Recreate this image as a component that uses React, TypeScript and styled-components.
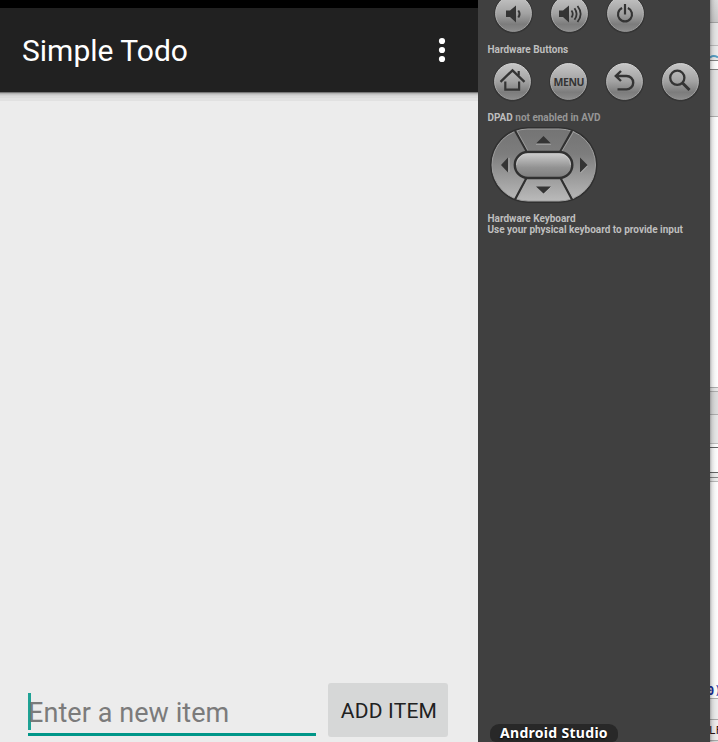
import React from 'react';
import styled, { createGlobalStyle } from 'styled-components';

const GlobalStyle = createGlobalStyle`
  body { margin: 0; overflow: hidden; background: #404040; }
  * { box-sizing: border-box; }
`;

const Screen = styled.div`
  display: grid;
  grid-template-columns: 478px 232px 8px;
  width: 718px;
  height: 742px;
  overflow: hidden;
  font-family: Roboto, "Liberation Sans", sans-serif;
`;

const Phone = styled.main`
  display: flex;
  flex-direction: column;
  min-width: 0;
  background: #ececec;
`;

const StatusBar = styled.div`
  height: 8px;
  flex: none;
  background: #000;
`;

const AppBar = styled.header`
  display: flex;
  flex: none;
  align-items: center;
  justify-content: space-between;
  height: 84px;
  padding: 0 31px 0 22px;
  background: #212121;
`;

const Title = styled.h1`
  margin: 2px 0 0;
  color: #fff;
  font-size: 30px;
  font-weight: 400;
  line-height: 36px;
`;

const OverflowButton = styled.button`
  display: flex;
  padding: 0;
  border: 0;
  background: none;
`;

const BarShadow = styled.div`
  height: 9px;
  flex: none;
  background: linear-gradient(#777 0 1px, #b0b0b0 1px 2px, #c6c6c6 2px 3px, #d2d2d2 3px 4px, #dadada 4px 6px, #e1e1e1 6px);
`;

const TodoList = styled.section`
  flex: 1;
`;

const EntryRow = styled.form`
  display: flex;
  flex: none;
  gap: 12px;
  height: 59px;
  padding: 0 30px 0 28px;
`;

const Field = styled.label`
  display: flex;
  align-items: center;
  width: 288px;
  height: 53px;
  border-bottom: 3px solid #009688;
  color: #7b7b7b;
  font-size: 27px;
  line-height: 32px;
`;

const Caret = styled.span`
  width: 3px;
  height: 37px;
  margin: 7px -3px 0 0;
  background: #1fa295;
`;

const Placeholder = styled.span`
  padding-top: 9px;
  letter-spacing: 0.07px;
  white-space: nowrap;
`;

const AddButton = styled.button`
  width: 120px;
  height: 54px;
  padding: 2px 0 0 2px;
  border: 0;
  border-radius: 3px;
  background: #d6d7d7;
  color: #212121;
  font: 400 21px/24px Roboto, sans-serif;
  letter-spacing: 0.2px;
  white-space: nowrap;
`;

const Controls = styled.aside`
  display: flex;
  flex-direction: column;
  min-width: 0;
  background: #404040;
`;

const KeyRow = styled.div<{ $left: number; $top: number }>`
  display: flex;
  flex: none;
  gap: 16px;
  height: 40px;
  margin: ${p => p.$top}px 0 0 ${p => p.$left}px;
`;

const Key = styled.button`
  display: flex;
  flex: none;
  width: 40px;
  height: 40px;
  padding: 0;
  border: 0;
  background: none;
`;

const Label = styled.p<{ $top: number; $dim?: boolean }>`
  flex: none;
  margin: ${p => p.$top}px 0 0 9.5px;
  color: ${p => (p.$dim ? '#969696' : '#bebebe')};
  font-size: 10px;
  font-weight: 700;
  line-height: 12px;
  letter-spacing: -0.01px;
  white-space: nowrap;
`;

const Strong = styled.span`
  color: #bebebe;
`;

const Pad = styled.div`
  flex: none;
  height: 78px;
  margin: 2px 0 0 11px;
`;

const DockLabel = styled.div`
  width: 128px;
  height: 18px;
  flex: none;
  margin: auto 0 0 12px;
  padding-left: 10px;
  border-radius: 9px 9px 6px 6px;
  background: #282828;
  color: #fff;
  font: 700 14px/17px "Noto Sans", "Open Sans", sans-serif;
  letter-spacing: 0.3px;
  text-shadow: 0 1px 2px #000;
  white-space: nowrap;
`;

const Edge = styled.div`
  display: flex;
  flex-direction: column;
  position: relative;
  overflow: hidden;
  &::after {
    content: "";
    position: absolute;
    inset: 0;
    background: linear-gradient(90deg, rgba(0,0,0,.3), rgba(0,0,0,.12) 25%, rgba(0,0,0,.04) 60%, transparent);
  }
`;

const Band = styled.div<{ $h: number; $bg: string; $line?: string }>`
  flex: none;
  height: ${p => p.$h}px;
  overflow: hidden;
  background: ${p => p.$bg};
  border-bottom: ${p => (p.$line ? `1px solid ${p.$line}` : '0')};
`;

const Code = styled.div<{ $top: number; $left: number; $color: string; $size: number }>`
  padding-top: ${p => p.$top}px;
  margin-left: ${p => p.$left}px;
  color: ${p => p.$color};
  font: ${p => p.$size}px/14px "DejaVu Sans Mono", monospace;
  white-space: nowrap;
`;

const Bold = styled.span`
  color: #1a2f9c;
  font-weight: 700;
`;

function RoundKey({ name, children }: { name: string; children: React.ReactNode }) {
  return (
    <Key aria-label={name}>
      <svg width="40" height="40" viewBox="0 0 40 40">
        <circle cx="19.5" cy="20" r="19.5" fill="#353535" />
        <circle cx="19.5" cy="19.5" r="17.9" fill="url(#metal)" stroke="url(#rim)" strokeWidth="1" />
        {children}
      </svg>
    </Key>
  );
}

const ink = '#343434';

const PadDrawing = styled.svg`
  display: block;
`;

const Gradients = styled.svg`
  display: block;
  flex: none;
`;

function DirectionPad() {
  return (
    <PadDrawing width="110" height="78" viewBox="0 0 110 78">
      <rect x="1" y="1" width="107.5" height="76" rx="38" fill="#303030" />
      <rect x="3" y="3" width="103.5" height="72" rx="36" fill="url(#pad)" stroke="#a0a0a0" />
      <path d="M26 4.5 38 26M83 4.5 71 26M38 51 26 73.5M71 51 83 73.5" stroke="#303030" strokeWidth="2.2" />
      <path d="M28 5 39 25M85 5 73 25M40 51 29 73M73 51 85 73" stroke="#aaa" strokeWidth=".7" />
      <rect x="25.8" y="26" width="57.5" height="26" rx="13" fill="url(#center)" stroke="#303030" strokeWidth="2.4" />
      <path d="M27.5 39a11.5 11.5 0 0 1 11.5-11.3h31a11.5 11.5 0 0 1 11.5 11.3" fill="none" stroke="#ccc" strokeWidth=".6" />
      <path d="M47 17.5 54.5 10l7.5 7.5ZM47 60.5h15l-7.5 7ZM12 39l7-7.5v15ZM91 31.5l7.5 7.5-7.5 7.5Z" fill="#343434" />
      <path d="M47 18.2h15M55 68l7-7M20 32v14M91.5 47l7-7" stroke="#b5b5b5" strokeWidth=".8" />
    </PadDrawing>
  );
}

export default function App() {
  return (
    <>
      <GlobalStyle />
      <Screen>
        <Phone>
          <StatusBar />
          <AppBar>
            <Title>Simple Todo</Title>
            <OverflowButton aria-label="More options">
              <svg width="10" height="26" viewBox="0 0 10 26" fill="#fff">
                <circle cx="5" cy="4" r="3.1" />
                <circle cx="5" cy="13" r="3.1" />
                <circle cx="5" cy="22" r="3.1" />
              </svg>
            </OverflowButton>
          </AppBar>
          <BarShadow />
          <TodoList />
          <EntryRow>
            <Field>
              <Caret />
              <Placeholder>Enter a new item</Placeholder>
            </Field>
            <AddButton type="button">ADD ITEM</AddButton>
          </EntryRow>
        </Phone>

        <Controls>
          <Gradients width="0" height="0">
            <defs>
              <linearGradient id="metal" x1="0" y1="0" x2="0" y2="1">
                <stop offset="0" stopColor="#c6c6c6" />
                <stop offset=".5" stopColor="#a2a2a2" />
                <stop offset=".8" stopColor="#7c7c7c" />
                <stop offset="1" stopColor="#8c8c8c" />
              </linearGradient>
              <linearGradient id="rim" x1="0" y1="0" x2="0" y2="1">
                <stop offset="0" stopColor="#d6d6d6" />
                <stop offset="1" stopColor="#949494" />
              </linearGradient>
              <linearGradient id="pad" x1="0" y1="0" x2="0" y2="1">
                <stop offset="0" stopColor="#747474" />
                <stop offset=".35" stopColor="#7d7d7d" />
                <stop offset="1" stopColor="#bababa" />
              </linearGradient>
              <linearGradient id="center" x1="0" y1="0" x2="0" y2="1">
                <stop offset="0" stopColor="#d2d2d2" />
                <stop offset=".6" stopColor="#929292" />
                <stop offset="1" stopColor="#7d7d7d" />
              </linearGradient>
            </defs>
          </Gradients>
          <KeyRow $top={-6} $left={16}>
            <RoundKey name="Volume down">
              <path d="M12 16.5h4l6-5v17l-6-5.5h-4Z" fill={ink} />
              <path d="M24.3 16.5q2.5 3.3 0 7" fill="none" stroke={ink} strokeWidth="2" />
            </RoundKey>
            <RoundKey name="Volume up">
              <path d="M9 16.5h4l6-5v17l-6-5.5h-4Z" fill={ink} />
              <path d="M21.5 16.5q2.5 3.3 0 7M24.5 14.2q4.2 5.8 0 11.6M27.5 12q6.3 8 0 16" fill="none" stroke={ink} strokeWidth="1.8" />
            </RoundKey>
            <RoundKey name="Power">
              <path d="M16.1 14A7 7 0 1 0 21.9 14" fill="none" stroke={ink} strokeWidth="2.2" />
              <path d="M19 10v10.5" stroke={ink} strokeWidth="2.2" />
            </RoundKey>
          </KeyRow>
          <Label $top={10}>Hardware Buttons</Label>
          <KeyRow $top={6} $left={15}>
            <RoundKey name="Home">
              <path d="m7.5 19.8 12-11.5 12 11.5" fill="none" stroke={ink} strokeWidth="2.3" />
              <path d="M25.7 13.5V9M12.3 19.5v8.2h13.8v-8.2" fill="none" stroke={ink} strokeWidth="2.2" />
            </RoundKey>
            <RoundKey name="Menu">
              <text x="20" y="24" textAnchor="middle" textLength="31" fill={ink} fontFamily="Open Sans, sans-serif" fontSize="10.5" fontWeight="700">MENU</text>
            </RoundKey>
            <RoundKey name="Back">
              <path d="M16 9 10.8 14l5.2 5M11 14H21.5a6.7 6.7 0 0 1 0 13.4H12.5" fill="none" stroke={ink} strokeWidth="2.4" />
            </RoundKey>
            <RoundKey name="Search">
              <circle cx="16.3" cy="15.8" r="7.1" fill="none" stroke={ink} strokeWidth="2.3" />
              <path d="m21.5 21 7 7" stroke={ink} strokeWidth="3" />
            </RoundKey>
          </KeyRow>
          <Label $top={10} $dim>
            <Strong>DPAD</Strong> not enabled in AVD
          </Label>
          <Pad><DirectionPad /></Pad>
          <Label $top={9}>Hardware Keyboard</Label>
          <Label $top={-1}>Use your physical keyboard to provide input</Label>
          <DockLabel>Android Studio</DockLabel>
        </Controls>

        <Edge>
          <Band $h={23} $bg="linear-gradient(#dedede, #cacaca)" $line="#a5a5a5" />
          <Band $h={23} $bg="#e7e7e7" $line="#bdbdbd" />
          <Band $h={15} $bg="#ededed" $line="#858585">
            <svg width="8" height="14" viewBox="0 0 8 14">
              <path d="M0 10.5q3.5-3 8 0" fill="none" stroke="#579fc5" strokeWidth="2" />
            </svg>
          </Band>
          <Band $h={9} $bg="#fff" $line="#858585" />
          <Band $h={47} $bg="#e6e6e6" $line="#b0b0b0" />
          <Band $h={271} $bg="#fff" $line="#b0b0b0" />
          <Band $h={4} $bg="#e9e9e9" $line="#b0b0b0" />
          <Band $h={23} $bg="#dedede" $line="#b0b0b0" />
          <Band $h={29} $bg="#e8e8e8" $line="#c0c0c0" />
          <Band $h={4} $bg="#fff" $line="#666" />
          <Band $h={25} $bg="#fff" $line="#666" />
          <Band $h={5} $bg="#eee" $line="#888" />
          <Band $h={4} $bg="#eee" $line="#bbb" />
          <Band $h={217} $bg="#fff" $line="#b0b0b0">
            <Code $top={202} $left={-3} $size={12} $color="#1a2f9c"><Bold>0</Bold>)</Code>
          </Band>
          <Band $h={21} $bg="#eeeeee" $line="#aaa" />
          <Band $h={21} $bg="#f1eeee" $line="#aaa">
            <Code $top={4} $left={-1} $size={11} $color="#301515">LF</Code>
          </Band>
          <Band $h={1} $bg="#ddd" />
        </Edge>
      </Screen>
    </>
  );
}
